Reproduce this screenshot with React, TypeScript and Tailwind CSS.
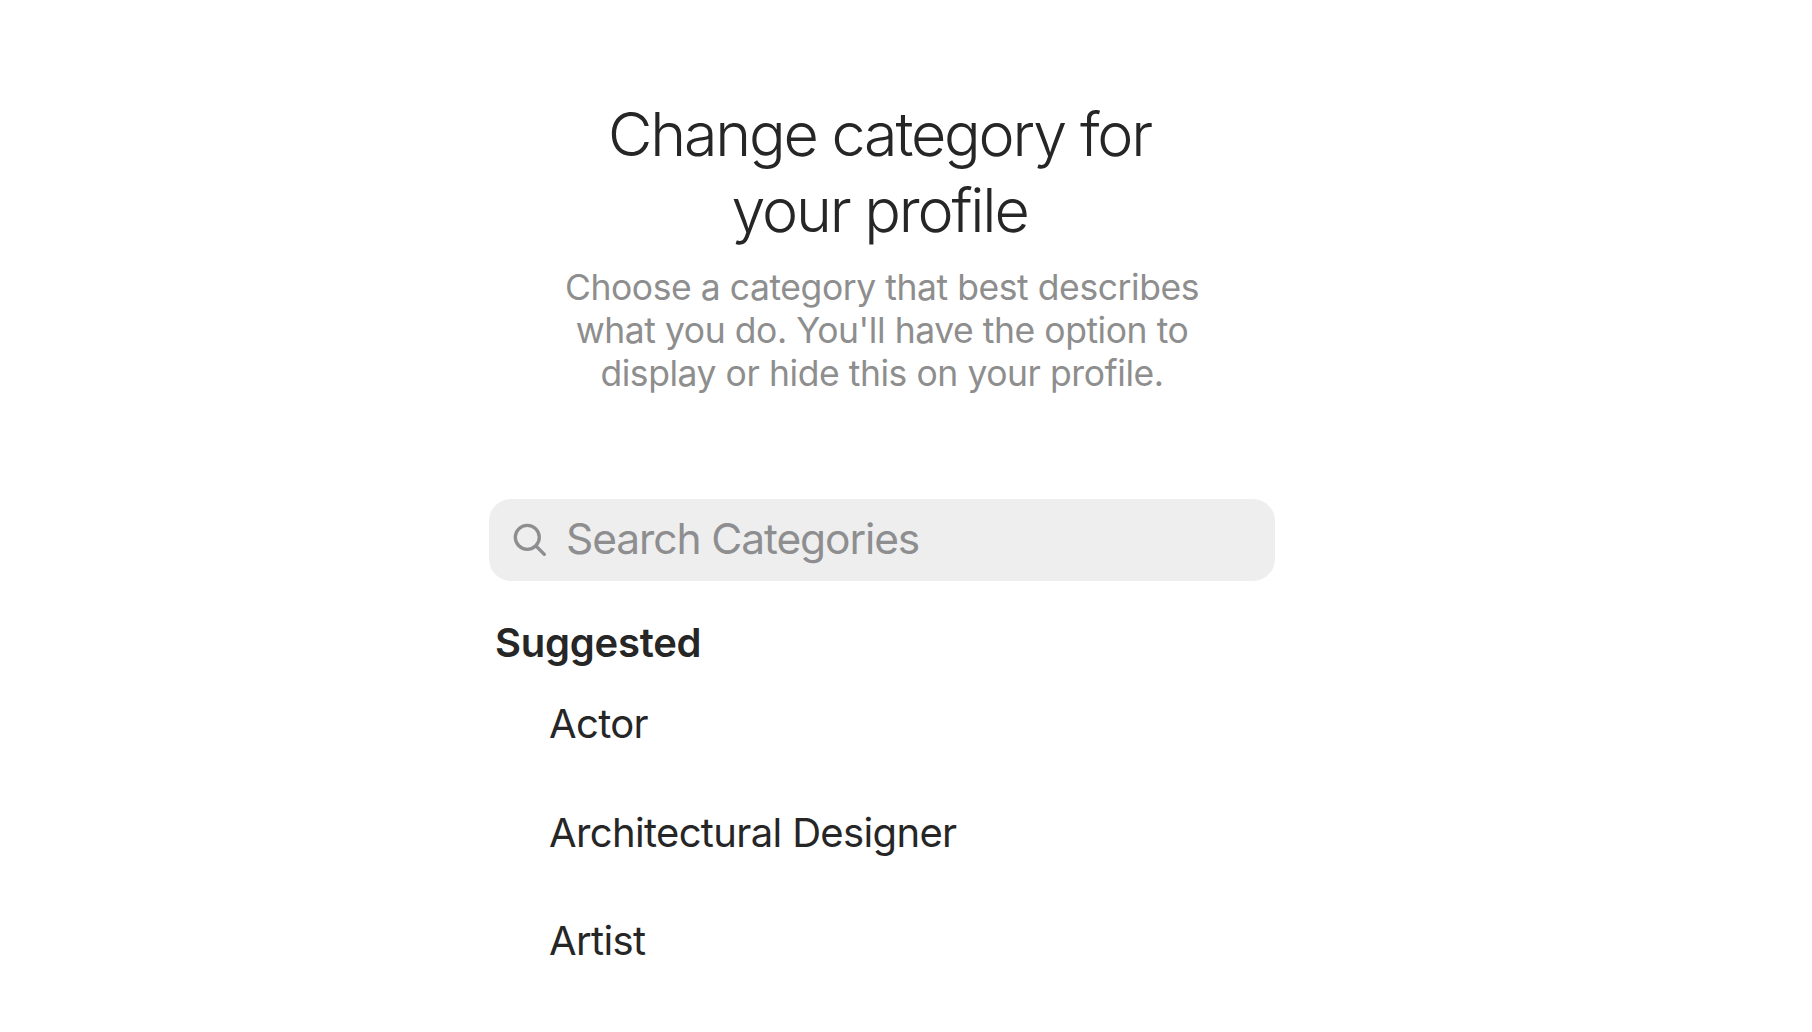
const categories = ["Actor", "Architectural Designer", "Artist"];

export default function App() {
  return (
    <main className="h-[1032px] w-full overflow-hidden bg-white pl-[489px] pt-24 font-['Inter',sans-serif] text-[#262626]">
      <div className="w-[786px]">
        <h1 className="flex flex-col items-center whitespace-nowrap pr-[5px] text-[61px] font-[330] leading-[76px] tracking-[-2.2px]">
          <span>Change category for</span>
          <span>your profile</span>
        </h1>
        <p className="mt-[18px] flex flex-col items-center whitespace-nowrap text-[35.5px] leading-[43px] tracking-[-0.44px] text-[#8e8e8e]">
          <span>Choose a category that best describes</span>
          <span>what you do. You'll have the option to</span>
          <span>display or hide this on your profile.</span>
        </p>
        <div className="mt-[104px] flex h-[82px] items-center rounded-[22px] bg-[#eeeeee] pl-6 text-[#8e8e90]">
          <svg className="size-[34px]" viewBox="0 0 34 34" fill="none" stroke="currentColor" strokeWidth="3.3" strokeLinecap="round">
            <circle cx="14.3" cy="14.3" r="12" />
            <path d="m23 23 8.3 8.3" />
          </svg>
          <span className="-mt-0.5 ml-[19px] text-[42.5px] tracking-[-1.1px]">Search Categories</span>
        </div>
        <h2 className="mt-[37px] pl-1.5 text-[40px] font-semibold leading-[50px] tracking-[-0.25px]">Suggested</h2>
        <ul className="mt-0.5 pl-[60px] text-[40px] tracking-[-0.65px]">
          {categories.map((c) => (
            <li key={c} className="flex h-[108.5px] items-center">{c}</li>
          ))}
        </ul>
      </div>
    </main>
  );
}
